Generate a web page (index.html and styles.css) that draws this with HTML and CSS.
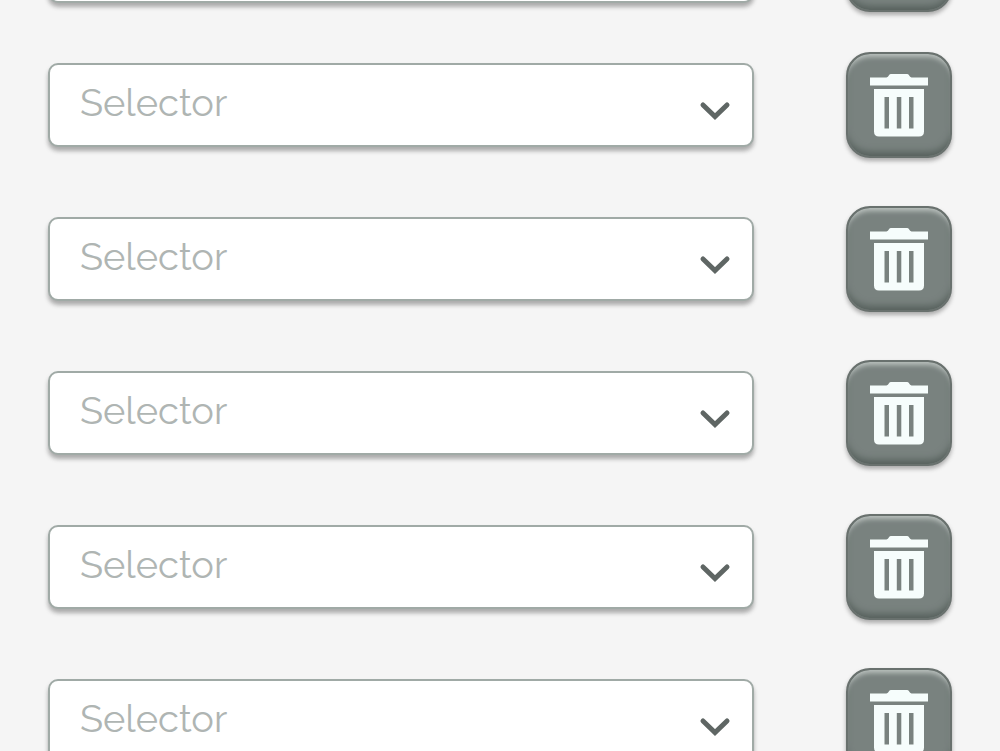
FILE: index.html
```html
<!DOCTYPE html>
<html lang="en">
<head>
<meta charset="utf-8">
<title>Selectors</title>
<link rel="stylesheet" href="styles.css">
</head>
<body>
<svg class="defs" aria-hidden="true">
  <symbol id="chevron" viewBox="0 0 32 20">
    <path d="M4 4 16 15.500 28 4" fill="none" stroke="currentColor" stroke-width="5" stroke-linecap="round"/>
  </symbol>
  <symbol id="trash" viewBox="0 0 60 66">
    <path fill="currentColor" d="M1 5.500H17.500Q19 5.300 20 3.200Q20.600 2 22 2H38Q39.400 2 40 3.200Q41 5.300 42.500 5.500H59V13.500H1Z"/>
    <path fill="currentColor" fill-rule="evenodd" d="M5 17H55V59.500Q55 64.500 50 64.500H10Q5 64.500 5 59.500ZM15.500 25V56.500H20V25ZM27.800 25V56.500H32.300V25ZM40 25V56.500H44.500V25Z"/>
  </symbol>
</svg>
<main class="list">
  <div class="row row-first">
    <div class="field"><select class="select" aria-label="Selector 1"><option>Selector</option></select><svg class="chevron" aria-hidden="true"><use href="#chevron"/></svg></div>
    <button class="delete" type="button" aria-label="Delete selector 1"><svg class="trash" aria-hidden="true"><use href="#trash"/></svg></button>
  </div>
  <div class="row">
    <div class="field"><select class="select" aria-label="Selector 2"><option>Selector</option></select><svg class="chevron" aria-hidden="true"><use href="#chevron"/></svg></div>
    <button class="delete" type="button" aria-label="Delete selector 2"><svg class="trash" aria-hidden="true"><use href="#trash"/></svg></button>
  </div>
  <div class="row">
    <div class="field"><select class="select" aria-label="Selector 3"><option>Selector</option></select><svg class="chevron" aria-hidden="true"><use href="#chevron"/></svg></div>
    <button class="delete" type="button" aria-label="Delete selector 3"><svg class="trash" aria-hidden="true"><use href="#trash"/></svg></button>
  </div>
  <div class="row">
    <div class="field"><select class="select" aria-label="Selector 4"><option>Selector</option></select><svg class="chevron" aria-hidden="true"><use href="#chevron"/></svg></div>
    <button class="delete" type="button" aria-label="Delete selector 4"><svg class="trash" aria-hidden="true"><use href="#trash"/></svg></button>
  </div>
  <div class="row">
    <div class="field"><select class="select" aria-label="Selector 5"><option>Selector</option></select><svg class="chevron" aria-hidden="true"><use href="#chevron"/></svg></div>
    <button class="delete" type="button" aria-label="Delete selector 5"><svg class="trash" aria-hidden="true"><use href="#trash"/></svg></button>
  </div>
  <div class="row">
    <div class="field"><select class="select" aria-label="Selector 6"><option>Selector</option></select><svg class="chevron" aria-hidden="true"><use href="#chevron"/></svg></div>
    <button class="delete" type="button" aria-label="Delete selector 6"><svg class="trash" aria-hidden="true"><use href="#trash"/></svg></button>
  </div>
</main>
</body>
</html>
```
FILE: styles.css
```css
* {
  box-sizing: border-box;
}

body {
  margin: 0;
  overflow: hidden;
  background: #f5f5f5;
  font-family: Raleway, Lato, sans-serif;
}

.defs {
  display: none;
}

/* The list is scrolled so that its first row is partly out of view. */
.list {
  display: flex;
  flex-direction: column;
  gap: 48px;
  margin-top: -94px;
  padding: 0 48px;
}

.row {
  display: flex;
  align-items: center;
  gap: 92px;
}

.row-first {
  margin-bottom: -8px;
}

.row-first .field {
  margin-top: 4px;
}

.field {
  display: grid;
  flex: 1;
  align-items: center;
}

.select {
  grid-area: 1 / 1;
  appearance: none;
  width: 100%;
  height: 84px;
  margin: 0;
  padding: 0 72px 6px 30px;
  border: 2px solid #a0aaa6;
  border-radius: 10px;
  background: #fff;
  box-shadow: 0 4px 4px rgba(60, 60, 60, 0.4);
  color: #afb5b3;
  font-family: inherit;
  font-size: 38px;
  font-weight: 400;
}

.chevron {
  grid-area: 1 / 1;
  justify-self: end;
  width: 32px;
  height: 20px;
  margin: 12px 23px 0 0;
  color: #5f6664;
  pointer-events: none;
}

.delete {
  display: grid;
  flex: none;
  place-items: center;
  width: 106px;
  height: 106px;
  padding: 0;
  border: 2px solid #69716e;
  border-radius: 24px;
  background: #79827f;
  box-shadow:
    inset 0 6px 5px -3px #bac1be,
    inset 0 -7px 7px -3px #56605c,
    0 3px 4px rgba(60, 60, 60, 0.4);
  color: #f6fdfc;
}

.trash {
  width: 60px;
  height: 66px;
}
```
